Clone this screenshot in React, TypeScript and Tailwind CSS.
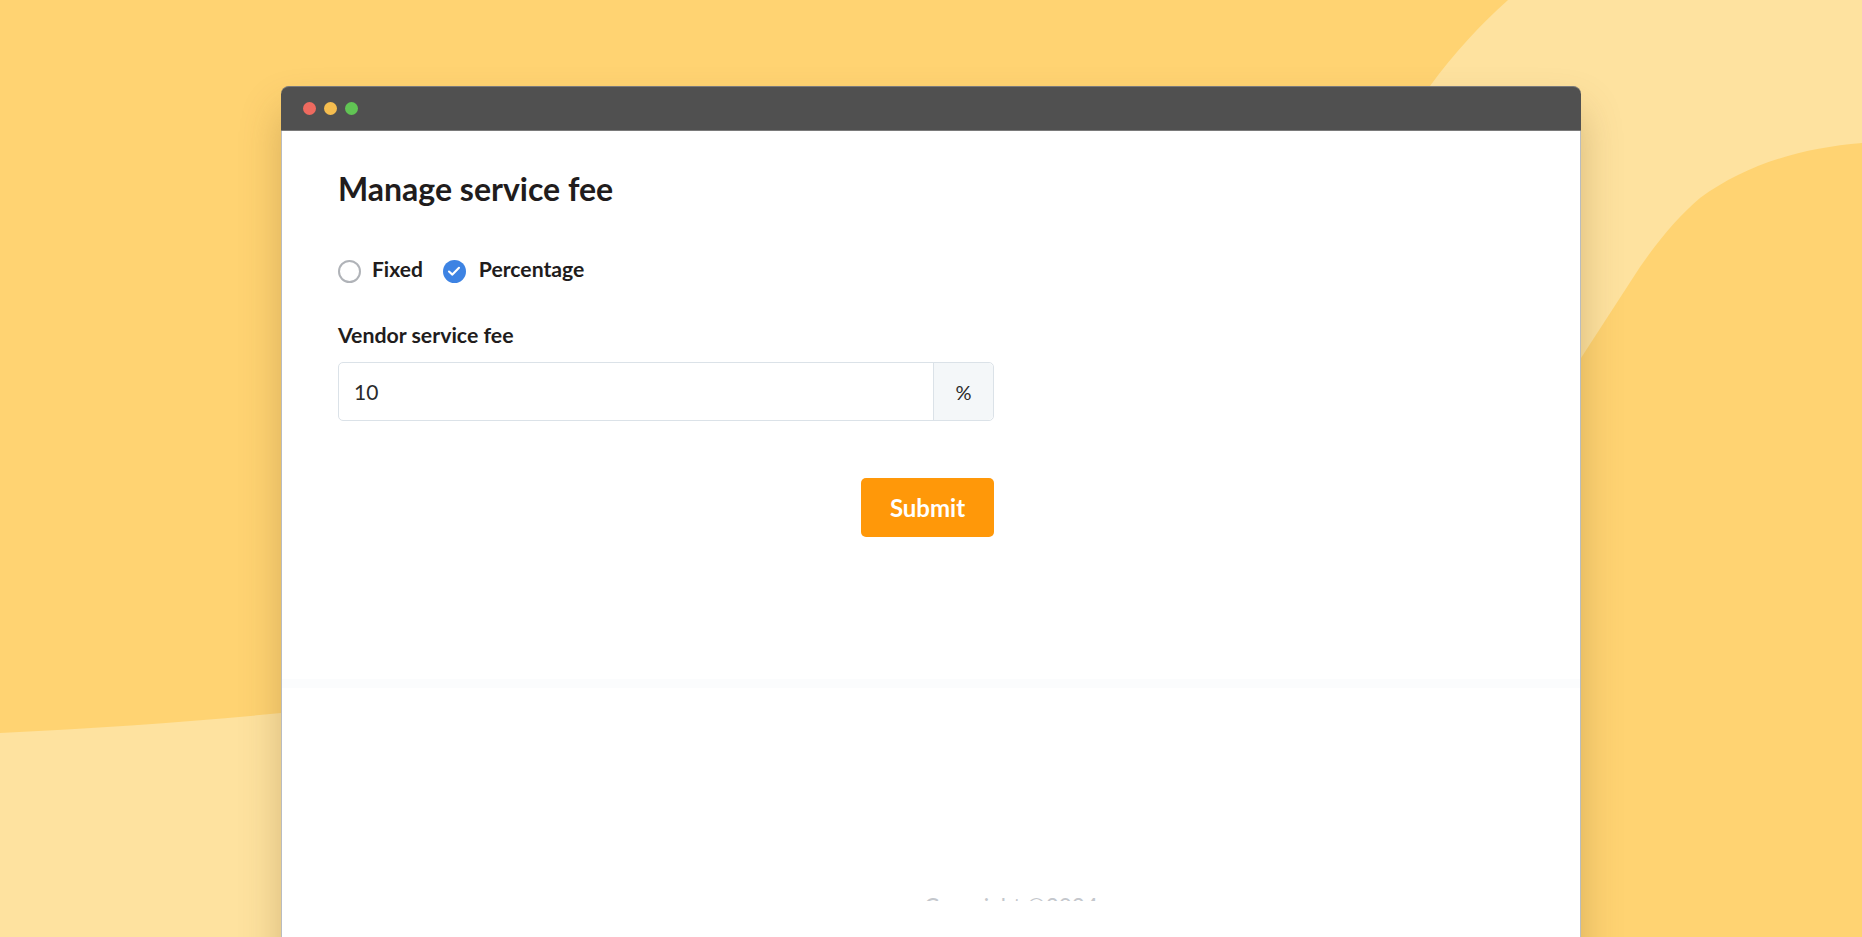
export default function App() {
  return (
    <div className="relative h-[937px] w-full overflow-hidden bg-[#ffd372] font-['Lato',sans-serif]">
      {/* background waves */}
      <svg className="absolute inset-0" width="1862" height="937" viewBox="0 0 1862 937" fill="none">
        <path
          d="M1508 0C1480 25 1455 52 1430 86V600L1581 358L1640 267C1660 238 1680 215 1700 198C1745 165 1800 148 1862 143V0Z"
          fill="#fee29f"
        />
        <path d="M0 733C100 728 190 722 281 713H400V937H0Z" fill="#fee29f" />
      </svg>

      <div className="relative ml-[281px] mt-[86px] h-[1000px] w-[1300px] rounded-t-[8px] shadow-[0_24px_40px_rgba(120,90,40,0.3)]">
        <div className="flex h-[45px] items-center gap-2 rounded-t-[8px] border-y border-[#7a7a7a] bg-[#505050] pl-[22px]">
          <span className="h-[13px] w-[13px] rounded-full bg-[#ee6a5f]" />
          <span className="h-[13px] w-[13px] rounded-full bg-[#f5bd4f]" />
          <span className="h-[13px] w-[13px] rounded-full bg-[#61c454]" />
        </div>

        <div className="h-[955px] border-x border-[#b9bcc0] bg-white">
          <div className="h-[557px] border-b-[9px] border-[#fbfcfd] pl-[56px] pt-[36px]">
            <h1 className="text-[32px] leading-[44px] font-bold text-[#211c1c]">Manage service fee</h1>

            <div className="mt-[46px] flex items-center">
              <span className="h-[23px] w-[23px] translate-y-[2px] rounded-full border-2 border-[#b0b3b8] bg-white" />
              <span className="ml-[11px] text-[21px] leading-6 font-bold text-[#211c1c]">Fixed</span>
              <span className="ml-[20px] flex h-[23px] w-[23px] translate-y-[2px] items-center justify-center rounded-full bg-[#3d83e3]">
                <svg width="14" height="14" viewBox="0 0 14 14" fill="none">
                  <path d="M2 7.5L5.4 10.6L12 3.8" stroke="white" strokeWidth="2.1" strokeLinecap="round" strokeLinejoin="round" />
                </svg>
              </span>
              <span className="ml-[13px] text-[21.2px] leading-6 font-bold text-[#211c1c]">Percentage</span>
            </div>

            <div className="mt-[42px] w-[656px]">
              <label className="block text-[21.3px] leading-6 font-bold text-[#211c1c]">Vendor service fee</label>
              <div className="mt-[15px] flex h-[59px] rounded-[5px] border border-[#dbe2e8]">
                <div className="flex flex-1 items-center pl-[15px] text-[21px] text-[#2b2b2b]">10</div>
                <div className="flex w-[60px] items-center justify-center rounded-r-[5px] border-l border-[#dbe2e8] bg-[#f4f7f9] text-[20px] text-[#2b2b2b]">
                  %
                </div>
              </div>
              <div className="mt-[57px] flex justify-end">
                <button className="h-[59px] w-[133px] rounded-[5px] bg-[#ff9809] text-[24px] font-bold text-white">Submit</button>
              </div>
            </div>
          </div>

          {/* footer text is clipped in the original too */}
          <div className="flex h-[213px] items-end justify-center overflow-hidden pl-[160px]">
            <span className="translate-y-[18px] text-[22.5px] leading-6 text-[#c4c7cc]">Copyright ©2024</span>
          </div>
        </div>
      </div>
    </div>
  );
}
